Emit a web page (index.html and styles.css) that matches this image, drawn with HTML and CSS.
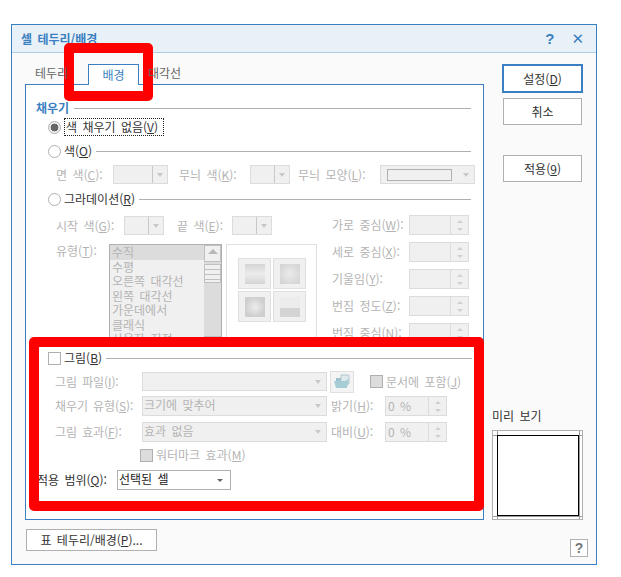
FILE: index.html
```html
<!DOCTYPE html>
<html lang="ko">
<head>
<meta charset="utf-8">
<title>셀 테두리/배경</title>
<link rel="stylesheet" href="styles.css">
</head>
<body>
<div class="dialog">
  <div class="titlebar">
    <span class="title">셀 테두리/배경</span>
    <span class="tb-btns"><span class="tb-q">?</span><span class="tb-x">✕</span></span>
  </div>
  <div class="body">
    <div class="left">
      <div class="tabs">
        <span class="tab t1">테두리</span>
        <span class="tab active">배경</span>
        <span class="tab t3">대각선</span>
      </div>
      <div class="panel">
        <div class="heading"><span class="h-text">채우기</span><i class="line"></i></div>
        <div class="row r-none"><span class="radio on"></span><span class="focus">색 채우기 없음(<u>V</u>)</span></div>
        <div class="row r-color"><span class="radio"></span><span class="lab">색(<u>O</u>)</span><i class="line"></i></div>
        <div class="row r-colors dis">
          <span class="lb w-a">면 색(<u>C</u>):</span><span class="combo w55"><b></b></span>
          <span class="lb w-b">무늬 색(<u>K</u>):</span><span class="combo w40"><b></b></span>
          <span class="lb w-c">무늬 모양(<u>L</u>):</span><span class="combo w94"><em></em><b class="nosep"></b></span>
        </div>
        <div class="row r-grad"><span class="radio"></span><span class="lab">그라데이션(<u>R</u>)</span><i class="line"></i></div>
        <div class="gradblock dis">
          <div class="g-left">
            <div class="row g-start">
              <span class="lb w-d">시작 색(<u>G</u>):</span><span class="combo w40"><b></b></span>
              <span class="lb w-e">끝 색(<u>E</u>):</span><span class="combo w40"><b></b></span>
            </div>
            <div class="g-type">
              <span class="lb w-f">유형(<u>T</u>):</span>
              <div class="list">
                <div class="items">
                  <div class="sel">수직</div><div>수평</div><div>오른쪽 대각선</div><div>왼쪽 대각선</div><div>가운데에서</div><div>클래식</div><div>사용자 지정</div>
                </div>
                <div class="scroll">
                  <span class="sb"><s class="up"></s></span>
                  <span class="thumb"></span>
                  <span class="track"></span>
                  <span class="sb"><s class="down"></s></span>
                </div>
              </div>
              <div class="thumbs">
                <span class="th"><i class="g1"></i></span><span class="th"><i class="g2"></i></span>
                <span class="th"><i class="g3"></i></span><span class="th"><i class="g4"></i></span>
              </div>
            </div>
          </div>
          <div class="g-right">
            <div class="row sr"><span class="lb w-g">가로 중심(<u>W</u>):</span><span class="spin w60"><span></span><b><s class="up"></s><s class="down"></s></b></span></div>
            <div class="row sr"><span class="lb w-g">세로 중심(<u>X</u>):</span><span class="spin w60"><span></span><b><s class="up"></s><s class="down"></s></b></span></div>
            <div class="row sr"><span class="lb w-g">기울임(<u>Y</u>):</span><span class="spin w60"><span></span><b><s class="up"></s><s class="down"></s></b></span></div>
            <div class="row sr"><span class="lb w-g">번짐 정도(<u>Z</u>):</span><span class="spin w60"><span></span><b><s class="up"></s><s class="down"></s></b></span></div>
            <div class="row sr"><span class="lb w-g">번짐 중심(<u>N</u>):</span><span class="spin w60"><span></span><b><s class="up"></s><s class="down"></s></b></span></div>
          </div>
        </div>
        <div class="row r-pic"><span class="check"></span><span class="lab">그림(<u>B</u>)</span><i class="line"></i></div>
        <div class="row r-file dis">
          <span class="lb w-h">그림 파일(<u>I</u>):</span><span class="combo w185"><b class="nosep"></b></span>
          <span class="folder"><svg width="18" height="16" viewBox="0 0 18 16"><path d="M3 4h5l1 1h5v8H3z" fill="#9cc0cc"/><path d="M8 1h8v9H8z" fill="#dfe9ee" stroke="#b4c8d0"/><path d="M1 7h11l4-2-2 9H3z" fill="#a6ccd6"/></svg></span>
          <span class="check grey"></span><span class="lab-j">문서에 포함(<u>J</u>)</span>
        </div>
        <div class="row r-fill dis">
          <span class="lb w-h">채우기 유형(<u>S</u>):</span><span class="combo w185 txt">크기에 맞추어<b class="nosep"></b></span>
          <span class="lb w-i">밝기(<u>H</u>):</span><span class="spin w62"><span>0 %</span><b><s class="up"></s><s class="down"></s></b></span>
        </div>
        <div class="row r-eff dis">
          <span class="lb w-h">그림 효과(<u>F</u>):</span><span class="combo w185 txt">효과 없음<b class="nosep"></b></span>
          <span class="lb w-i">대비(<u>U</u>):</span><span class="spin w62"><span>0 %</span><b><s class="up"></s><s class="down"></s></b></span>
        </div>
        <div class="row r-water dis"><span class="check grey"></span><span class="lab-j">워터마크 효과(<u>M</u>)</span></div>
        <div class="row r-range"><span class="lb-range">적용 범위(<u>Q</u>):</span><span class="select">선택된 셀<b></b></span></div>
      </div>
      <button class="btn tablebtn">표 테두리/배경(<u>P</u>)...</button>
    </div>
    <div class="right">
      <button class="btn default">설정(<u>D</u>)</button>
      <button class="btn cancel">취소</button>
      <button class="btn apply">적용(<u>9</u>)</button>
      <div class="pv-label">미리 보기</div>
      <div class="preview">
        <svg width="89" height="88" viewBox="0 0 89 88">
          <path d="M4.5 0V88M86.5 0V88M0 4.5H89M0 85.5H89" stroke="#9a9a9a" fill="none"/>
          <rect x="4.5" y="4.5" width="81" height="80" fill="#fff" stroke="#000"/>
        </svg>
      </div>
      <span class="helpbtn">?</span>
    </div>
  </div>
</div>
<div class="mark mark-tab"></div>
<div class="mark mark-pic"></div>
</body>
</html>
```
FILE: styles.css
```css
* { box-sizing: border-box; }
html, body { margin: 0; padding: 0; background: #fff; }
body {
  width: 621px; height: 577px; overflow: hidden; position: relative;
  padding: 24px 0 0 11px;
  font: 12px/14px "Noto Sans CJK KR", "Liberation Sans", sans-serif;
  color: #333;
  word-spacing: 2px;
}
u { text-decoration: underline; text-underline-offset: 1px; }
i, b, s, em { display: block; font-style: normal; text-decoration: none; }

.dialog { width: 586px; height: 541px; border: 1px solid #3a7fc1; background: #fafafa; }
.titlebar {
  height: 28px; background: #e9f1f8; border-bottom: 1px solid #a9cde8;
  display: flex; align-items: center; justify-content: space-between;
  padding: 0 12px 0 9px;
}
.title { color: #3a7fc1; font-weight: 700; font-size: 12px; }
.tb-btns { display: flex; align-items: center; gap: 17px; color: #3a7fc1; font-weight: 700; }
.tb-q { font: 700 15px/16px "Liberation Sans", sans-serif; }
.tb-x { font: 700 15px/16px "DejaVu Sans", sans-serif; }

.body { display: flex; height: 512px; }
.left { width: 490px; padding: 11px 0 0 13px; flex: none; }
.right { flex: none; width: 95px; position: relative; padding-top: 11px; }

.tabs { display: flex; height: 20px; align-items: flex-end; color: #666; position: relative; z-index: 1; }
.tab { display: block; height: 21px; line-height: 19px; white-space: nowrap; }
.t1 { width: 53px; margin-left: 10px; }
.tab.active { width: 51px; color: #3a7fc1; text-align: center; background: #fff; border: 1px solid #3a7fc1; border-bottom: 0; flex: none; margin-bottom: -1px; }
.t3 { margin-left: 9px; }

.panel { width: 459px; height: 436px; background: #fff; border: 1px solid #3a7fc1; padding: 16px 0 0 10px; }
.line { flex: 1; height: 1px; background: #b0b0b0; }
.row { display: flex; align-items: center; white-space: nowrap; }

.heading { display: flex; align-items: center; height: 14px; width: 435px; }
.h-text { color: #3a7fc1; font-weight: 700; margin-right: 5px; }
.radio { flex: none; width: 13px; height: 13px; border: 1px solid #b0b0b0; border-radius: 50%; background: #fff; display: block; margin-left: 12px; }
.radio.on { background: radial-gradient(circle, #666 0 3.6px, #f0f0f0 4.2px); }
.focus { margin-left: 3px; border: 1px dotted #222; padding: 0 1px; height: 18px; line-height: 16px; width: 100px; color: #333; }
.lab { margin-left: 3px; margin-right: 4px; color: #333; }

.r-none { margin-top: 3px; height: 18px; }
.r-color { margin-top: 6px; height: 18px; width: 435px; }
.r-colors { margin-top: 5px; height: 19px; }
.r-grad { margin-top: 6px; height: 18px; width: 435px; }

.dis, .dis u { color: #b4b4b4; }
.lb { display: block; flex: none; }
.w-a { width: 57px; margin-left: 20px; }
.w-b { width: 71px; margin-left: 11px; }
.w-c { width: 82px; margin-left: 8px; }
.w-d { width: 68px; margin-left: 20px; }
.w-e { width: 55px; margin-left: 13px; }
.w-f { width: 53px; margin-left: 20px; }
.w-g { width: 77px; }
.w-h { width: 87px; margin-left: 19px; letter-spacing: -.1px; }
.w-i { width: 54px; margin-left: 4px; }

.combo {
  flex: none; display: block; height: 19px; background: #f0f0f0; border: 1px solid #dcdcdc;
  position: relative;
}
.combo b { position: absolute; right: 0; top: 0; bottom: 0; width: 15px; border-left: 1px solid #c8c8c8; }
.combo b.nosep { border-left: 0; }
.combo b::after, .select b::after {
  content: ""; position: absolute; left: 4px; top: 7px;
  border: 3.5px solid transparent; border-top: 4px solid #c8c8c8; border-bottom: 0;
}
.combo em { position: absolute; left: 6px; top: 3px; width: 65px; height: 12px; border: 1px solid #b0b0b0; background: #f0f0f0; }
.w55 { width: 55px; }
.w40 { width: 40px; }
.w94 { width: 95px; }
.w185 { width: 185px; }
.combo.txt { padding-left: 1px; line-height: 15px; }

.gradblock { margin-top: 7px; height: 130px; overflow: hidden; display: flex; }
.g-left { width: 295px; flex: none; }
.g-start { margin-top: 1px; height: 19px; }
.g-type { display: flex; margin-top: 9px; }
.g-type .lb { padding-top: 0; }
.list { width: 113px; height: 110px; border: 1px solid #b0b0b0; background: #f0f0f0; display: flex; flex: none; }
.items { flex: 1; line-height: 14.4px; }
.items div { height: 14.5px; padding-left: 2px; }
.items .sel { background: #dcdcdc; }
.scroll { width: 17px; background: #dcdcdc; display: flex; flex-direction: column; flex: none; }
.sb { display: block; height: 17px; border: 1px solid #c0c0c0; background: #f0f0f0; position: relative; flex: none; }
.thumb { display: block; height: 19px; margin-top: 2px; border: 1px solid #c0c0c0; background: repeating-linear-gradient(#f0f0f0 0 4px, #c0c0c0 4px 5px); flex: none; }
.track { display: block; flex: 1; }
s.up, s.down { display: block; width: 0; height: 0; border: 4px solid transparent; }
.scroll s { position: absolute; left: 3px; }
.scroll s.up { top: 3px; border-bottom: 5px solid #b8b8b8; border-top: 0; border-left-width: 5px; border-right-width: 5px; }
.scroll s.down { top: 6px; border-top: 5px solid #b8b8b8; border-bottom: 0; border-left-width: 5px; border-right-width: 5px; }
.thumbs {
  width: 91px; height: 110px; margin-left: 4px; border: 1px solid #e0e0e0; flex: none;
  display: grid; grid-template-columns: 33px 33px; grid-auto-rows: 31px; gap: 2px 2px; padding: 13px 10px 0 11px; align-content: start;
}
.th { display: flex; align-items: center; justify-content: center; background: #f0f0f0; border: 1px solid #e0e0e0; }
.th i { width: 20px; height: 20px; }
.g1 { background: linear-gradient(#d4d4d4, #ececec 50%, #d4d4d4); }
.g2 { background: radial-gradient(circle, #eaeaea, #d2d2d2); }
.g3 { background: radial-gradient(circle, #e8e8e8 10%, #cfcfcf 70%); }
.g4 { background: linear-gradient(180deg, #ececec 0 55%, #d4d4d4 55%); }

.g-right { flex: none; padding-top: 0; margin-left: 1px; }
.sr { height: 20px; margin-bottom: 7px; }
.spin { flex: none; display: flex; height: 20px; border: 1px solid #dcdcdc; background: #f0f0f0; }
.spin > span { flex: 1; padding-left: 2px; line-height: 17px; }
.spin b { width: 18px; flex: none; border-left: 1px solid #dcdcdc; display: flex; flex-direction: column; align-items: center; justify-content: center; gap: 5px; }
.spin s.up { border-width: 0 3px 3px; border-bottom-color: #d0d0d0; border-style: solid; border-left-color: transparent; border-right-color: transparent; }
.spin s.down { border-width: 3px 3px 0; border-top-color: #d0d0d0; border-style: solid; border-left-color: transparent; border-right-color: transparent; }
.w60 { width: 60px; }
.w62 { width: 62px; }

.r-pic { margin-top: 4px; height: 18px; width: 436px; }
.check { flex: none; display: block; width: 13px; height: 13px; border: 1px solid #b0b0b0; background: #fff; margin-left: 12px; }
.check.grey { background: #dcdcdc; }
.r-file { margin-top: 5px; height: 19px; }
.folder { flex: none; display: flex; width: 24px; height: 22px; align-items: center; justify-content: center; border: 1px solid #e0e0e0; background: #f4f4f4; margin-left: 3px; }
.r-file .check { margin-left: 16px; }
.lab-j { margin-left: 3px; }
.r-fill { margin-top: 5px; height: 20px; }
.r-fill .combo, .r-eff .combo { height: 20px; }
.r-eff { margin-top: 6px; height: 20px; }
.r-water { margin-top: 6px; height: 14px; margin-left: 104px; }
.r-water .check { margin-left: 0; }
.r-range { margin-top: 8px; height: 20px; }
.lb-range { display: block; width: 80px; margin-left: 1px; flex: none; color: #333; }
.select { display: block; position: relative; width: 114px; height: 20px; border: 1px solid #b0b0b0; background: #fff; padding-left: 1px; line-height: 16px; flex: none; color: #222; }
.select b { position: absolute; right: 1px; top: 0; width: 15px; height: 18px; }
.select b::after { border-top-color: #666; left: 3px; top: 8px; border-width: 3px 3.5px 0; border-style: solid; border-color: #666 transparent transparent; }

.btn { display: block; font: inherit; word-spacing: inherit; color: #333; background: #fff; border: 1px solid #b0b0b0; padding: 0; cursor: default; }
.tablebtn { width: 131px; height: 22px; margin: 9px 0 0 1px; }
.default { width: 81px; height: 29px; border: 2px solid #3a7fc1; }
.cancel { width: 79px; height: 27px; margin: 5px 0 0 1px; }
.apply { width: 79px; height: 27px; margin: 30px 0 0 1px; }
.pv-label { margin-top: 227px; margin-left: -10px; color: #333; height: 14px; line-height: 14px; }
.preview { position: absolute; left: -10px; top: 377px; width: 91px; height: 90px; border: 1px solid #b0b0b0; background: #fff; }
.preview svg { display: block; }
.helpbtn { position: absolute; left: 68px; top: 486px; width: 18px; height: 18px; border: 1px solid #b0b0b0; background: #fff; color: #777; text-align: center; font: 700 14px/16px "Liberation Sans", sans-serif; }

.mark { position: absolute; border: 10px solid #f00; border-radius: 5px; pointer-events: none; }
.mark-tab { left: 64px; top: 43px; width: 89px; height: 58px; }
.mark-pic { left: 29px; top: 337px; width: 455px; height: 174px; }
```
